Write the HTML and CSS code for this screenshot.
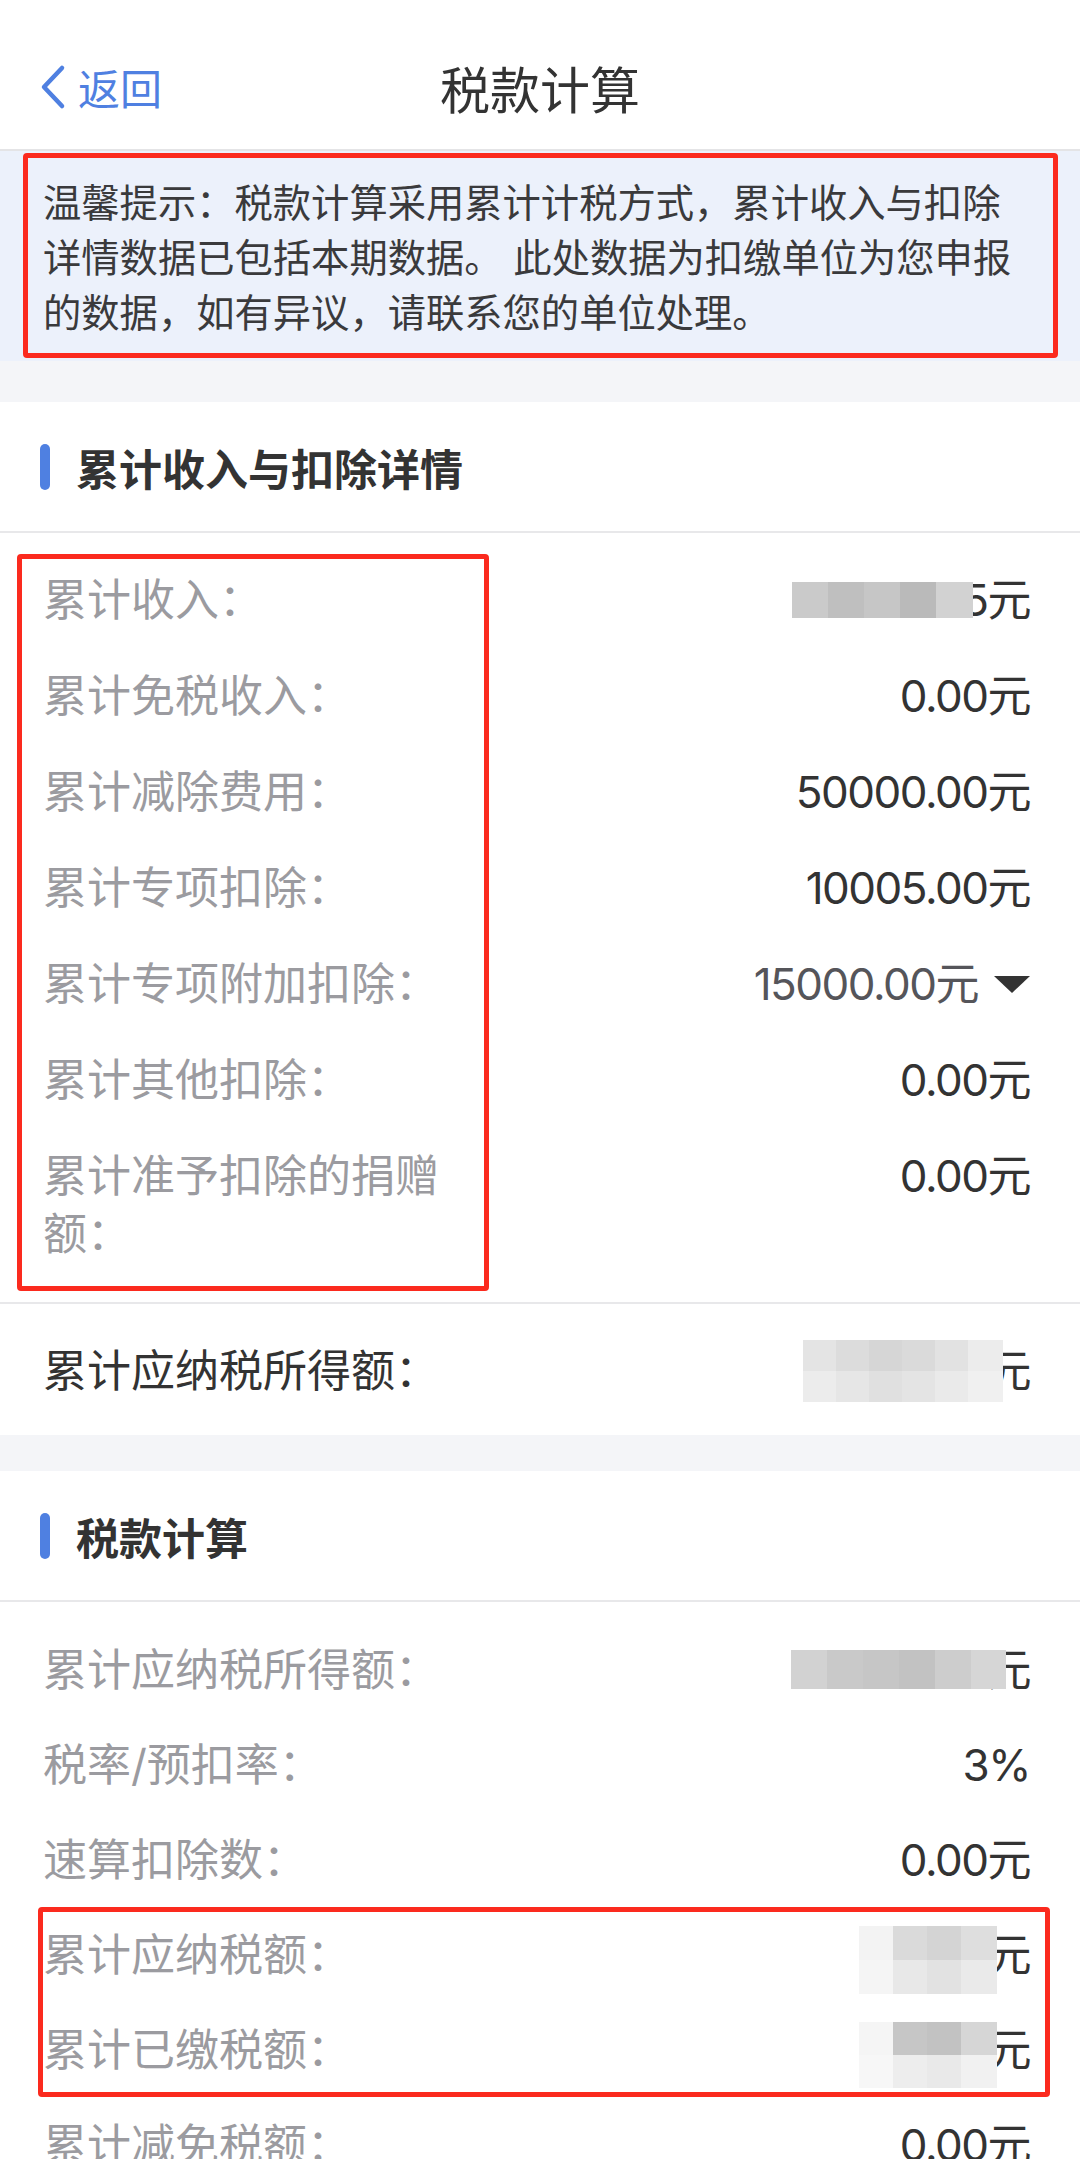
FILE: index.html
```html
<!DOCTYPE html>
<html lang="zh-CN">
<head>
  <meta charset="UTF-8" />
  <title>税款计算</title>
  <meta name="viewport" content="width=device-width, initial-scale=1.0" />
  <link rel="stylesheet" href="styles.css">
</head>
<body>
  <div class="nav">
    <a href="#" class="back">
      <svg class="back-icon" viewBox="0 0 26 46" width="26" height="46">
        <polyline points="22,4 4,23 22,42" />
      </svg>
      返回
    </a>
    <div class="nav-title">税款计算</div>
    <div></div>
  </div>

  <div class="notice">
    <p class="notice-text">温馨提示：税款计算采用累计计税方式，累计收入与扣除详情数据已包括本期数据。 此处数据为扣缴单位为您申报的数据，如有异议，请联系您的单位处理。</p>
  </div>

  <section class="card card-first">
    <h3 class="card-head">累计收入与扣除详情</h3>
    <div class="rows">
      <div class="mark-labels"></div>
      <div class="row">
        <span class="label">累计收入：</span>
        <span class="value"><span class="mosaic mz-income"></span><span>5元</span></span>
      </div>
      <div class="row">
        <span class="label">累计免税收入：</span>
        <span class="value">0.00元</span>
      </div>
      <div class="row">
        <span class="label">累计减除费用：</span>
        <span class="value">50000.00元</span>
      </div>
      <div class="row">
        <span class="label">累计专项扣除：</span>
        <span class="value">10005.00元</span>
      </div>
      <div class="row">
        <span class="label">累计专项附加扣除：</span>
        <span class="value value-soft">15000.00元
          <svg class="caret" viewBox="0 0 36 17" width="36" height="17"><polygon points="0,0 36,0 18,17" /></svg>
        </span>
      </div>
      <div class="row">
        <span class="label">累计其他扣除：</span>
        <span class="value">0.00元</span>
      </div>
      <div class="row">
        <span class="label">累计准予扣除的捐赠额：</span>
        <span class="value">0.00元</span>
      </div>
    </div>
    <div class="row row-total">
      <span class="label">累计应纳税所得额：</span>
      <span class="value"><span class="mosaic mz-total"></span><span>元</span></span>
    </div>
  </section>

  <section class="card">
    <h3 class="card-head">税款计算</h3>
    <div class="rows rows-compact">
      <div class="row">
        <span class="label">累计应纳税所得额：</span>
        <span class="value"><span class="mosaic mz-taxable"></span><span>元</span></span>
      </div>
      <div class="row">
        <span class="label">税率/预扣率：</span>
        <span class="value">3%</span>
      </div>
      <div class="row">
        <span class="label">速算扣除数：</span>
        <span class="value">0.00元</span>
      </div>
      <div class="marked">
        <div class="row">
          <span class="label">累计应纳税额：</span>
          <span class="value"><span class="mosaic mz-payable"></span><span>元</span></span>
        </div>
        <div class="row">
          <span class="label">累计已缴税额：</span>
          <span class="value"><span class="mosaic mz-paid"></span><span>元</span></span>
        </div>
      </div>
      <div class="row">
        <span class="label">累计减免税额：</span>
        <span class="value">0.00元</span>
      </div>
    </div>
  </section>
</body>
</html>
```

FILE: styles.css
```css
html, body {
  margin: 0;
  padding: 0;
  font-family: Inter, "Noto Sans CJK SC", sans-serif;
  background: #f4f5f8;
  color: #333;
}

.nav {
  height: 125px;
  padding-top: 24px;
  display: grid;
  grid-template-columns: 1fr auto 1fr;
  align-items: center;
  background: #fff;
  border-bottom: 2px solid #e4e4e6;
}

.back {
  display: flex;
  align-items: center;
  gap: 12px;
  padding-left: 40px;
  color: #4f80e1;
  font-size: 42px;
  text-decoration: none;
}

.back-icon polyline {
  fill: none;
  stroke: #4f80e1;
  stroke-width: 4.5;
  stroke-linecap: round;
  stroke-linejoin: round;
}

.nav-title {
  font-size: 50px;
  color: #333;
}

.notice {
  background: #ecf1fb;
  padding: 2px 22px 3px 23px;
}

.notice-text {
  margin: 0;
  padding: 18px 30px 12px 15px;
  border: 5px solid #fb2a1e;
  border-radius: 4px;
  font-size: 38.3px;
  line-height: 55px;
  color: #3a3a3c;
}

.card {
  background: #fff;
  margin-top: 36px;
}

.card-first {
  margin-top: 41px;
}

.card-head {
  margin: 0;
  height: 129px;
  display: flex;
  align-items: center;
  gap: 26px;
  padding-left: 40px;
  font-size: 43px;
  font-weight: bold;
  color: #333;
  border-bottom: 2px solid #e8e8ea;
}

.card-head::before {
  content: "";
  width: 10px;
  height: 46px;
  border-radius: 5px;
  background: #4f80e1;
}

.rows {
  position: relative;
  padding: 19px 50px 20px 43px;
  border-bottom: 2px solid #e8e8ea;
}

.rows-compact {
  padding-top: 20px;
  border-bottom: none;
}

.row {
  display: flex;
  justify-content: space-between;
  align-items: flex-start;
  padding: 19px 0;
  font-size: 44px;
  line-height: 58px;
}

.rows-compact .row {
  padding: 18.5px 0;
}

.label {
  max-width: 420px;
  color: #9b9ba0;
}

.value {
  display: flex;
  align-items: center;
  height: 58px;
  color: #333;
  letter-spacing: -1.5px;
  white-space: nowrap;
}

.value-soft {
  color: #55555a;
}

.caret {
  margin-left: 16px;
}

.caret polygon {
  fill: #333;
}

.row-total {
  padding: 38px 50px 35px 43px;
}

.row-total .label {
  color: #333;
}

/* red annotation boxes */
.mark-labels {
  position: absolute;
  left: 17px;
  top: 21px;
  width: 472px;
  height: 737px;
  box-sizing: border-box;
  border: 5px solid #fb2a1e;
  border-radius: 4px;
  pointer-events: none;
}

.marked {
  margin: 0 -20px 0 -5px;
  padding: 0 20px 0 5px;
  border-radius: 4px;
  outline: 5px solid #fb2a1e;
  outline-offset: -5px;
}

/* pixelated values */
.mosaic {
  position: relative;
  display: inline-block;
  flex-shrink: 0;
}

.mz-income {
  width: 181px;
  height: 36px;
  margin-right: -11px;
  background: linear-gradient(90deg, #cacaca 0 36px, #bfbfbf 36px 72px, #c6c6c6 72px 108px, #bababa 108px 144px, #d2d2d2 144px);
}

.mz-total {
  width: 200px;
  height: 62px;
  margin-right: -15px;
  background:
    linear-gradient(90deg, #e4e4e4 0 33px, #dcdcdc 33px 66px, #d6d6d6 66px 99px, #dadada 99px 132px, #e2e2e2 132px 165px, #ececec 165px) top / 100% 50% no-repeat,
    linear-gradient(90deg, #ececec 0 33px, #e6e6e6 33px 66px, #e0e0e0 66px 99px, #e4e4e4 99px 132px, #eaeaea 132px 165px, #f0f0f0 165px) bottom / 100% 50% no-repeat;
}

.mz-taxable {
  width: 215px;
  height: 39px;
  margin-right: -18px;
  background: linear-gradient(90deg, #d2d2d2 0 36px, #c9c9c9 36px 72px, #c6c6c6 72px 108px, #c2c2c2 108px 144px, #cdcdcd 144px 180px, #d6d6d6 180px);
}

.mz-payable {
  width: 138px;
  height: 68px;
  margin-top: 10px;
  margin-right: -9px;
  background:
    linear-gradient(90deg, #f3f3f3 0 34px, #dadada 34px 68px, #d4d4d4 68px 102px, #dedede 102px) top / 100% 50% no-repeat,
    linear-gradient(90deg, #f5f5f5 0 34px, #e8e8e8 34px 68px, #e2e2e2 68px 102px, #eaeaea 102px) bottom / 100% 50% no-repeat;
}

.mz-paid {
  width: 138px;
  height: 66px;
  margin-top: 10px;
  margin-right: -9px;
  background:
    linear-gradient(90deg, #f5f5f5 0 34px, #c6c6c6 34px 68px, #c2c2c2 68px 102px, #d6d6d6 102px) top / 100% 50% no-repeat,
    linear-gradient(90deg, #f7f7f7 0 34px, #ededed 34px 68px, #e9e9e9 68px 102px, #f1f1f1 102px) bottom / 100% 50% no-repeat;
}
```
